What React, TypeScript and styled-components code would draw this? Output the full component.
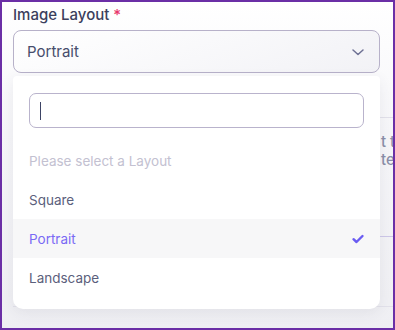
import React from "react";
import styled, { createGlobalStyle } from "styled-components";

const GlobalStyle = createGlobalStyle`
  html, body { margin: 0; padding: 0; }
  body { font-family: Inter, "Noto Sans", sans-serif; }
  * { box-sizing: border-box; }
`;

const Frame = styled.div`
  position: relative;
  width: 395px;
  height: 330px;
  border: 2px solid #6b2fa6;
  overflow: hidden;
  background: linear-gradient(180deg, #ffffff 0%, #f6f6f9 40%, #efeff3 100%);
  padding: 0 13px 0 11px;
`;

const Label = styled.div`
  margin-top: 3px;
  height: 25px;
  font-size: 15px;
  font-weight: 500;
  color: #3b3f5c;
  line-height: 20px;
`;

const Required = styled.span`
  color: #e8376b;
`;

const SelectBox = styled.div`
  display: flex;
  align-items: center;
  justify-content: space-between;
  height: 43px;
  padding: 0 14px 0 13px;
  border: 1px solid #b7b1c9;
  border-radius: 8px;
  background: linear-gradient(160deg, #ffffff 0%, #f2f2f6 100%);
  font-size: 15px;
  color: #474d6c;
`;

const Behind = styled.div`
  margin-top: 3px;
  margin-right: -13px;
  height: 240px;
  display: flex;
  flex-direction: column;
`;

const BehindTop = styled.div`
  height: 42px;
  border-bottom: 1px solid #e2e1ea;
`;

const BehindText = styled.div`
  padding: 15px 0 0 368px;
  font-size: 15px;
  font-weight: 500;
  line-height: 18px;
  color: #8a8ea8;
  white-space: nowrap;
  height: 119px;
  border-bottom: 1px solid #cdc7e8;
`;

const BehindBottom = styled.div`
  height: 70px;
  border-bottom: 1px solid #e2e1ea;
`;

const Menu = styled.div`
  position: absolute;
  left: 11px;
  top: 74px;
  width: 367px;
  height: 233px;
  background: #ffffff;
  border-radius: 4px 4px 10px 10px;
  box-shadow: 0 4px 14px rgba(60, 60, 90, 0.08);
  padding: 17px 0 12px;
  display: flex;
  flex-direction: column;
`;

const SearchBox = styled.div`
  position: relative;
  margin: 0 16px 13px;
  height: 35px;
  border: 1px solid #b9b3cc;
  border-radius: 7px;
  background: #fff;
`;

const Caret = styled.span`
  position: absolute;
  left: 10px;
  top: 8px;
  width: 1px;
  height: 18px;
  background: #3d4465;
`;

const Option = styled.div<{ $selected?: boolean; $placeholder?: boolean }>`
  display: flex;
  align-items: center;
  justify-content: space-between;
  height: 39px;
  padding: 0 15px 0 16px;
  font-size: 13.5px;
  color: ${(p) => (p.$placeholder ? "#c3c1d1" : p.$selected ? "#7a6af5" : "#5b607c")};
  background: ${(p) => (p.$selected ? "#f7f7f8" : "transparent")};
`;

const Chevron = () => (
  <svg width="14" height="14" viewBox="0 0 14 14" fill="none">
    <path d="M2 5l5 4.5L12 5" stroke="#6e7194" strokeWidth="1.5" strokeLinecap="round" strokeLinejoin="round" />
  </svg>
);

const Check = () => (
  <svg width="14" height="14" viewBox="0 0 14 14" fill="none">
    <path d="M2.5 7.2l3 2.8L11.5 4" stroke="#6a5cf2" strokeWidth="2.4" strokeLinecap="round" strokeLinejoin="round" />
  </svg>
);

export default function App() {
  return (
    <>
      <GlobalStyle />
      <Frame>
        <Label>
          Image Layout <Required>*</Required>
        </Label>
        <SelectBox>
          <span>Portrait</span>
          <Chevron />
        </SelectBox>
        <Behind>
          <BehindTop />
          <BehindText>
            <div>t to</div>
            <div>te</div>
          </BehindText>
          <BehindBottom />
        </Behind>
        <Menu>
          <SearchBox>
            <Caret />
          </SearchBox>
          <Option $placeholder>Please select a Layout</Option>
          <Option>Square</Option>
          <Option $selected>
            <span>Portrait</span>
            <Check />
          </Option>
          <Option>Landscape</Option>
        </Menu>
      </Frame>
    </>
  );
}
